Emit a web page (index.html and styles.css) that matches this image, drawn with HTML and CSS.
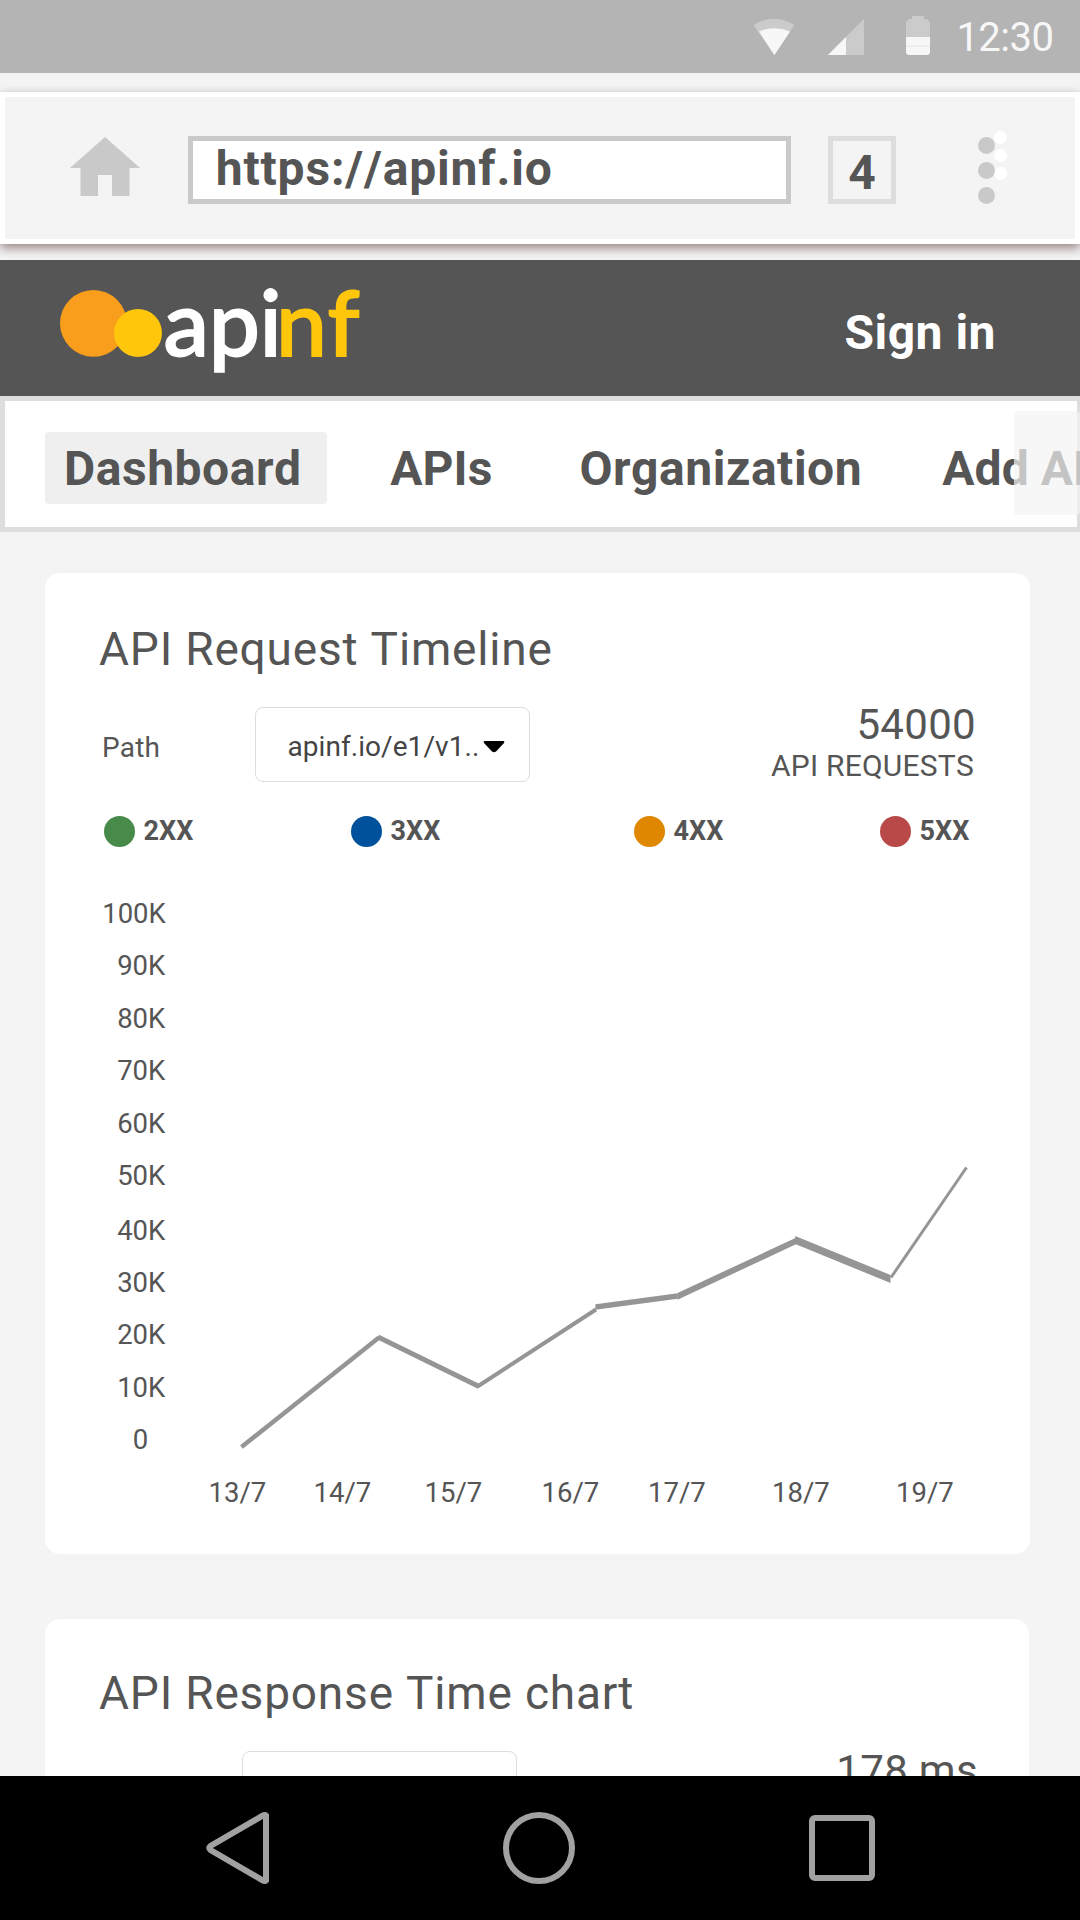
FILE: index.html
```html
<!DOCTYPE html>
<html lang="en">
<head>
<meta charset="utf-8">
<title>apinf dashboard</title>
<link rel="stylesheet" href="styles.css">
</head>
<body>
<div class="screen">
  <div class="status">
    <svg class="status-wifi" width="42" height="37" viewBox="753 18 42 37">
      <path d="M753.5 25Q774 12.500 794.500 25L774 55Z" fill="#cbcbcb"/>
      <path d="M759 31.500Q774 25 790 31.500L774.500 55Z" fill="#f7f7f7"/>
    </svg>
    <svg class="status-signal" width="36" height="36" viewBox="0 0 36 36">
      <path d="M0 36L36 0V36Z" fill="#cbcbcb"/>
      <path d="M0 36L18 18V36Z" fill="#f7f7f7"/>
    </svg>
    <svg class="status-battery" width="24" height="39" viewBox="0 0 24 39">
      <path d="M6 0H18V3H21L24 6V21H0V6L3 3H6Z" fill="#cbcbcb"/>
      <path d="M0 21H24V37L22 39H2L0 37Z" fill="#f7f7f7"/>
      <path d="M0 30H24" stroke="#e4e4e4"/>
    </svg>
    <span class="time">12:30</span>
  </div>

  <div class="browser">
    <svg class="home" width="70" height="59" viewBox="0 0 70 59">
      <path d="M35 0L70 31H59.500V59H42V38H28V59H10.500V31H0Z" fill="#c9c9c9"/>
    </svg>
    <div class="url">https://apinf.io</div>
    <div class="tabs">4</div>
    <svg class="menu" width="29" height="73" viewBox="0 0 29 73">
      <g fill="#fff"><circle cx="22.500" cy="6.500" r="6.500"/><circle cx="22.500" cy="24.500" r="6.500"/><circle cx="22.500" cy="42.500" r="6.500"/></g>
      <g fill="#c9c9c9"><circle cx="8.500" cy="14.500" r="8.500"/><circle cx="8.500" cy="39.500" r="8.500"/><circle cx="8.500" cy="64.500" r="8.500"/></g>
    </svg>
  </div>

  <header class="header">
    <svg class="logo" width="310" height="96" viewBox="60 285 310 96">
      <circle cx="93.400" cy="323.300" r="33.400" fill="#f99d1c"/>
      <circle cx="138" cy="333" r="24" fill="#ffc60b"/>
      <text class="logo-text" y="355.500" x="163.500 208.800 259.600 276 327.500"><tspan class="logo-white">api</tspan><tspan class="logo-yellow">nf</tspan></text>
    </svg>
    <a class="signin">Sign in</a>
  </header>

  <nav class="nav">
    <a class="tab tab-active">Dashboard</a>
    <a class="tab tab-apis">APIs</a>
    <a class="tab">Organization</a>
    <a class="tab tab-last">Add API</a>
    <div class="nav-fade"></div>
  </nav>

  <main class="content">
    <section class="card">
      <h2 class="title">API Request Timeline</h2>
      <div class="controls">
        <span class="path">Path</span>
        <div class="select">apinf.io/e1/v1..
          <svg class="caret" width="22" height="12" viewBox="0 0 22 12"><path d="M1.500 0H20.500Q22 .5 21 2L13 10.500Q11 12 9 10.500L1 2Q0 .5 1.500 0Z"/></svg>
        </div>
        <div class="stats"><div class="stat-value">54000</div><div class="stat-label">API REQUESTS</div></div>
      </div>
      <div class="legend">
        <span class="key"><i class="dot dot-green"></i>2XX</span>
        <span class="key"><i class="dot dot-blue"></i>3XX</span>
        <span class="key"><i class="dot dot-orange"></i>4XX</span>
        <span class="key"><i class="dot dot-red"></i>5XX</span>
      </div>
      <svg class="chart" width="985" height="684" viewBox="45 870 985 684">
        <g class="axis axis-y">
          <text x="165.800" y="922.700">100K</text><text x="165.300" y="975">90K</text><text x="165.300" y="1027.700">80K</text>
          <text x="165.300" y="1080">70K</text><text x="165.300" y="1132.700">60K</text><text x="165.300" y="1185">50K</text>
          <text x="165.300" y="1240">40K</text><text x="165.300" y="1292">30K</text><text x="165.300" y="1344">20K</text>
          <text x="165.300" y="1397">10K</text><text x="148.300" y="1449">0</text>
        </g>
        <g class="axis">
          <text x="208.500" y="1502">13/7</text><text x="313.500" y="1502">14/7</text><text x="424.500" y="1502">15/7</text><text x="541.500" y="1502">16/7</text>
          <text x="648" y="1502">17/7</text><text x="772" y="1502">18/7</text><text x="896" y="1502">19/7</text>
        </g>
        <g class="line">
          <path class="w45" d="M241.500 1447L379 1337.500"/>
          <path class="w5" d="M378 1337L479 1386.500"/>
          <path class="w4" d="M477.500 1386.500L596 1309.500"/>
          <path class="area" d="M595.400 1304.300L677.700 1293.200V1298.800L595.400 1309.800Z"/>
          <path class="area" d="M677.500 1293L796.500 1237.500V1244L677.500 1299.700Z"/>
          <path class="area" d="M795.200 1236L890.500 1275V1283L795.200 1244Z"/>
          <path class="w3" d="M891 1277.500L966.500 1167.500"/>
        </g>
      </svg>
    </section>

    <section class="card card-next">
      <h2 class="title">API Response Time chart</h2>
      <div class="controls controls-next">
        <div class="select"></div>
        <div class="stats"><div class="stat-value">178 ms</div></div>
      </div>
    </section>
  </main>

  <footer class="system">
    <svg class="back" width="63" height="72" viewBox="206 1812 63 72"><path d="M266 1815.500Q265 1814.500 263 1815.500L210.500 1846Q208 1848 210.500 1850L263 1880.500Q265 1881.500 266 1880.500Z"/></svg>
    <svg class="circle" width="72" height="72" viewBox="0 0 72 72"><circle cx="36" cy="36" r="33"/></svg>
    <svg class="square" width="66" height="66" viewBox="0 0 66 66"><rect x="3" y="3" width="60" height="60" rx="3"/></svg>
  </footer>
</div>
</body>
</html>
```
FILE: styles.css
```css
* { box-sizing: border-box; }
body { margin: 0; font-family: Roboto, sans-serif; font-kerning: none; color: #555; background: #f4f4f4; }
svg { display: block; flex: none; }

.screen { display: flex; flex-direction: column; width: 1080px; height: 1920px; overflow: hidden; background: #f4f4f4; white-space: nowrap; }

.status { flex: none; display: flex; align-items: flex-start; height: 73px; padding: 0 0 0 753px; background: #b4b4b4; }
.status-wifi { margin-top: 18px; }
.status-signal { margin: 19px 0 0 33px; }
.status-battery { margin: 16px 0 0 42px; }
.time { margin-left: 26.400px; font-size: 40px; font-weight: 400; line-height: 75px; letter-spacing: -.530px; color: #f7f7f7; }

.browser { flex: none; display: flex; align-items: flex-start; height: 152px; margin: 19px 0 16px; border: 5px solid #fff; background: #f4f4f4; box-shadow: 0 4px 10px rgba(60, 20, 20, .5); }
.home { margin: 40px 0 0 65px; }
.url { width: 603px; height: 68px; margin: 39px 0 0 48px; padding-left: 22.700px; border: 5px solid #c9c9c9; background: #fff; font-size: 48px; font-weight: 700; line-height: 55px; letter-spacing: .850px; }
.tabs { width: 68px; height: 68px; margin: 39px 0 0 37px; border: 5px solid #ddd; font-size: 48px; font-weight: 700; line-height: 63px; text-align: center; }
.menu { margin: 34px 0 0 82px; }

.header { flex: none; display: flex; justify-content: space-between; height: 136px; padding: 25px 84px 0 60px; background: #555; color: #fff; }
.logo { overflow: visible; }
.logo-text { font: 500 91px Lato, sans-serif; stroke-width: 1.800px; }
.logo-white { fill: #fff; stroke: #fff; }
.logo-yellow { fill: #ffc60b; stroke: #ffc60b; }
.signin { font-size: 48px; font-weight: 700; line-height: 95px; letter-spacing: .480px; }

.nav { position: relative; flex: none; display: grid; grid-template-columns: 345.200px 189.200px 362.800px auto; height: 136px; padding: 31px 0 0 40px; border: 5px solid #ddd; border-right-width: 3px; background: #fff; }
.tab { font-size: 48px; font-weight: 700; line-height: 73px; letter-spacing: .530px; height: 72px; }
.tab-active { width: 282px; padding-left: 19px; border-radius: 4px; background: #efefef; }
.tab-last, .tab-apis { letter-spacing: .1px; }
.nav-fade { position: absolute; top: 10px; right: -3px; width: 66px; height: 104px; border-radius: 4px; background: rgba(244, 244, 244, .7); }

.content { flex: 1; min-height: 0; overflow: hidden; padding: 41px 50px 0 45px; }
.card { height: 981px; padding-top: 47.500px; border-radius: 15px; background: #fff; }
.card-next { width: 984px; margin-top: 65px; padding-top: 45.500px; }
.title { margin: 0 0 30.500px 54px; font-size: 46px; font-weight: 400; line-height: 56px; letter-spacing: .820px; }
.controls { display: flex; align-items: flex-start; height: 75px; padding: 0 55px 0 57px; }
.path { width: 153px; font-size: 28px; line-height: 81px; letter-spacing: .170px; }
.select { display: flex; align-items: flex-start; width: 275px; height: 75px; padding-left: 31.500px; border: 1px solid #ddd; border-radius: 8px; font-size: 28px; line-height: 77px; letter-spacing: .060px; color: #444; }
.caret { margin: 33px 0 0 4px; fill: #000; }
.stats { margin: -2px 0 0 auto; text-align: right; line-height: 40.500px; }
.stat-value { margin-right: -1px; font-size: 42px; letter-spacing: .320px; }
.stat-label { margin-right: 1px; font-size: 30px; letter-spacing: .230px; }
.controls-next { height: 75px; padding: 0 52px 0 197px; }
.controls-next .stats { margin-top: 0; }

.legend { display: grid; grid-template-columns: 247px 283px 246px auto; margin: 34px 0 23px 59px; }
.key { display: flex; align-items: center; gap: 8.500px; height: 31px; font-size: 27px; font-weight: 700; line-height: 33px; }
.dot { width: 31px; height: 31px; border-radius: 50%; }
.dot-green { background: #478a4a; }
.dot-blue { background: #00519b; }
.dot-orange { background: #e08700; }
.dot-red { background: #b94848; }

.axis { font-size: 27.500px; fill: #555; }
.axis-y { text-anchor: end; }
.line { fill: none; stroke: #959595; }
.area { fill: #959595; stroke: none; }
.w3 { stroke-width: 3; }
.w4 { stroke-width: 4; }
.w45 { stroke-width: 4.500; }
.w5 { stroke-width: 5; }

.system { flex: none; display: flex; align-items: center; height: 144px; padding-left: 206px; background: #000; fill: none; stroke: #a1a1a1; stroke-width: 6; }
.circle { margin-left: 234px; }
.square { margin-left: 234px; }
```
